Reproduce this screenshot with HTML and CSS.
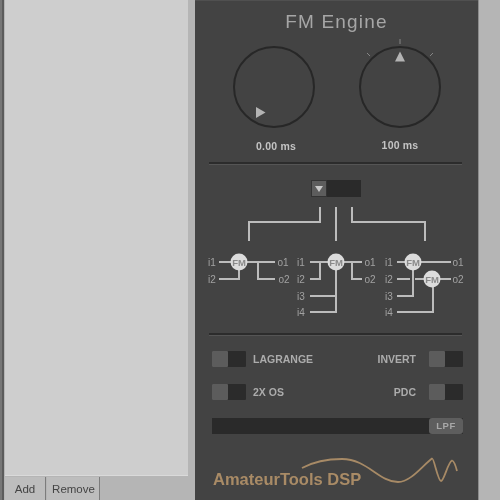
FILE: index.html
```html
<!DOCTYPE html>
<html lang="en">
<head>
  <meta charset="UTF-8">
  <title>FM Engine</title>
  <link rel="stylesheet" href="styles.css">
</head>
<body>
  <div class="edge"></div>
  <div class="side">
    <div class="list"></div>
    <div class="buttons">
      <div class="btn btn-add">Add</div>
      <div class="btn btn-remove">Remove</div>
    </div>
  </div>
  <div class="panel">
    <div class="title">FM Engine</div>
    <div class="knobs">
      <div class="knob">
        <svg width="90" height="92" viewBox="0 0 90 92">
          <circle cx="45" cy="51" r="40" class="knob-ring"/>
          <polygon points="27,71 27,82 36.500,76.500" class="knob-mark"/>
        </svg>
        <div class="knob-value knob-value-left">0.00 ms</div>
      </div>
      <div class="knob">
        <svg width="90" height="92" viewBox="0 0 90 92">
          <line x1="45" y1="3" x2="45" y2="8" class="knob-tick"/>
          <line x1="12" y1="17" x2="15" y2="20" class="knob-tick"/>
          <line x1="78" y1="17" x2="75" y2="20" class="knob-tick"/>
          <circle cx="45" cy="51" r="40" class="knob-ring"/>
          <polygon points="45,15.500 40,25.500 50,25.500" class="knob-mark"/>
        </svg>
        <div class="knob-value">100 ms</div>
      </div>
    </div>
    <div class="sep sep-top"></div>
    <div class="combo">
      <div class="combo-btn"></div>
    </div>
    <svg class="routing" width="283" height="120" viewBox="0 205 283 120">
      <!-- selector lines -->
      <path d="M125 207V222H54V241M141 207V241M157 207V222H230V241"/>
      <!-- 1 -->
      <path d="M24 262H80M24 279H44V262M63 262V279H80"/>
      <circle cx="44" cy="262" r="8.500"/>
      <text x="44" y="265.500" class="fm">FM</text>
      <text x="17" y="265.500">i1</text>
      <text x="17" y="282.500">i2</text>
      <text x="88" y="265.500">o1</text>
      <text x="89" y="282.500">o2</text>
      <!-- 2 -->
      <path d="M115 262H167M115 279H125V262M157 262V279H167M115 296H141M115 312H141V262"/>
      <circle cx="141" cy="262" r="8.500"/>
      <text x="141" y="265.500" class="fm">FM</text>
      <text x="106" y="265.500">i1</text>
      <text x="106" y="282.500">i2</text>
      <text x="106" y="299.500">i3</text>
      <text x="106" y="315.500">i4</text>
      <text x="175" y="265.500">o1</text>
      <text x="175" y="282.500">o2</text>
      <!-- 3 -->
      <path d="M202 262H256M202 279H215M220 279H256M202 296H218V262M202 312H238V279"/>
      <circle cx="218" cy="262" r="8.500"/>
      <circle cx="237" cy="279" r="8.500"/>
      <text x="218" y="265.500" class="fm">FM</text>
      <text x="237" y="282.500" class="fm">FM</text>
      <text x="194" y="265.500">i1</text>
      <text x="194" y="282.500">i2</text>
      <text x="194" y="299.500">i3</text>
      <text x="194" y="315.500">i4</text>
      <text x="263" y="265.500">o1</text>
      <text x="263" y="282.500">o2</text>
    </svg>
    <div class="sep sep-bottom"></div>
    <div class="options">
      <div class="option">
        <div class="toggle"><div class="toggle-thumb"></div></div>
        <span class="option-label">LAGRANGE</span>
      </div>
      <div class="option">
        <span class="option-label">INVERT</span>
        <div class="toggle"><div class="toggle-thumb"></div></div>
      </div>
      <div class="option">
        <div class="toggle"><div class="toggle-thumb"></div></div>
        <span class="option-label">2X OS</span>
      </div>
      <div class="option">
        <span class="option-label">PDC</span>
        <div class="toggle"><div class="toggle-thumb"></div></div>
      </div>
    </div>
    <div class="slider">
      <div class="slider-thumb">LPF</div>
    </div>
    <svg class="logo" width="283" height="44" viewBox="0 0 283 44">
      <path d="M107 13C120 6 135 4 147 4C172 4 184 27 203 27C216 27 228 10 237 3.500C239 3 243 26 246 26C249 26 253 7 257 5.500C259 6 261 12 262 16"/>
      <text x="18" y="30">AmateurTools DSP</text>
    </svg>
  </div>
  <div class="gutter"></div>
</body>
</html>
```

FILE: styles.css
```css
* {margin: 0; padding: 0; box-sizing: border-box;}
body {
  display: flex;
  width: 500px;
  height: 500px;
  overflow: hidden;
  background-color: #b5b5b5;
  font-family: "Liberation Sans", Arial, sans-serif;
}
.edge {
  width: 4px;
  background-color: #5c5c5c;
  border-left: 2px solid #777;
}
.side {
  width: 191px;
  display: flex;
  flex-direction: column;
  filter: blur(0.4px);
}
.list {
  width: 183px;
  margin-left: 1px;
  height: 476px;
  background-color: #cecece;
  border-bottom: 1px solid #dadada;
}
.buttons {
  display: flex;
  margin-left: 1px;
  flex: 1;
  padding-top: 1px;
  gap: 1px;
}
.btn {
  display: flex;
  align-items: center;
  justify-content: center;
  background-color: #bdbdbd;
  border-right: 1px solid #7c7c7c;
  color: #444;
  font-size: 11.500px;
}
.btn-add {width: 41px;}
.btn-remove {width: 53px; padding-left: 1px;}
.panel {
  width: 283px;
  display: flex;
  flex-direction: column;
  background-color: #434343;
  border-top: 1px solid #505050;
  filter: blur(0.4px);
}
.title {
  margin-top: 9px;
  height: 24px;
  line-height: 24px;
  text-align: center;
  font-size: 19px;
  letter-spacing: 1.2px;
  color: #a6a6a6;
}
.knobs {
  display: flex;
  gap: 36px;
  margin-top: 2px;
  padding-left: 34px;
}
.knob {
  width: 90px;
}
.knob svg {
  display: block;
}
.knob-ring {
  fill: none;
  stroke: #272727;
  stroke-width: 2;
}
.knob-mark {
  fill: #b4b4b4;
}
.knob-tick {
  stroke: #858585;
  stroke-width: 1;
}
.knob-value {
  margin-top: 10px;
  height: 14px;
  line-height: 14px;
  text-align: center;
  font-size: 10.500px;
  font-weight: bold;
  letter-spacing: 0.2px;
  color: #c4c4c4;
}
.knob-value-left {
  margin-top: 11px;
  padding-left: 4px;
}
.sep {
  margin-left: 14px;
  width: 253px;
  height: 3px;
  background-color: #2c2c2c;
  border-bottom: 1px solid #555;
}
.sep-top {margin-top: 9px;}
.sep-bottom {margin-top: 8px;}
.combo {
  margin-top: 15px;
  margin-left: 116px;
  width: 50px;
  height: 17px;
  background-color: #2a2a2a;
}
.combo-btn {
  position: relative;
  width: 16px;
  height: 17px;
  background-color: #5d5d5d;
  border: 1px solid #333;
}
.combo-btn::after {
  content: "";
  position: absolute;
  left: 3px;
  top: 5px;
  border-left: 4px solid transparent;
  border-right: 4px solid transparent;
  border-top: 6px solid #c8c8c8;
}
.routing {
  display: block;
  margin-top: 8px;
}
.routing path {
  fill: none;
  stroke: #bcbcbc;
  stroke-width: 2;
}
.routing circle {
  fill: #dcdcdc;
}
.routing text {
  font-family: "Liberation Sans", Arial, sans-serif;
  font-size: 10px;
  text-anchor: middle;
  fill: #a2a2a2;
}
.routing .fm {
  font-size: 9.500px;
  font-weight: bold;
  fill: #8a8a8a;
}
.options {
  margin-top: 15px;
  padding: 0 15px 0 17px;
  display: grid;
  grid-template-columns: 1fr auto;
  row-gap: 17px;
}
.option {
  display: flex;
  align-items: center;
  justify-content: flex-end;
  gap: 13px;
  height: 16px;
}
.option:nth-child(odd) {
  justify-content: flex-start;
  gap: 7px;
}
.option-label {
  font-size: 10.500px;
  font-weight: bold;
  color: #acacac;
}
.toggle {
  width: 34px;
  height: 16px;
  background-color: #2b2b2b;
  border-radius: 1px;
}
.toggle-thumb {
  width: 16px;
  height: 16px;
  background-color: #5c5c5c;
  border-radius: 1px;
}
.slider {
  margin-top: 18px;
  margin-left: 17px;
  width: 251px;
  height: 16px;
  display: flex;
  justify-content: flex-end;
  background-color: #2a2a2a;
}
.slider-thumb {
  width: 34px;
  line-height: 16px;
  text-align: center;
  font-size: 9.500px;
  font-weight: bold;
  letter-spacing: 0.6px;
  color: #a8a8a8;
  background-color: #5e5e5e;
  border-radius: 3px;
}
.logo {
  display: block;
  margin-top: 21px;
}
.logo path {
  fill: none;
  stroke: #a78a66;
  stroke-width: 1.800;
}
.logo text {
  font-family: "Liberation Sans", Arial, sans-serif;
  font-size: 16.500px;
  font-weight: bold;
  fill: #a98b66;
}
.gutter {
  flex: 1;
  border-left: 1px solid #8c8c8c;
  background-color: #b5b5b5;
}
```
